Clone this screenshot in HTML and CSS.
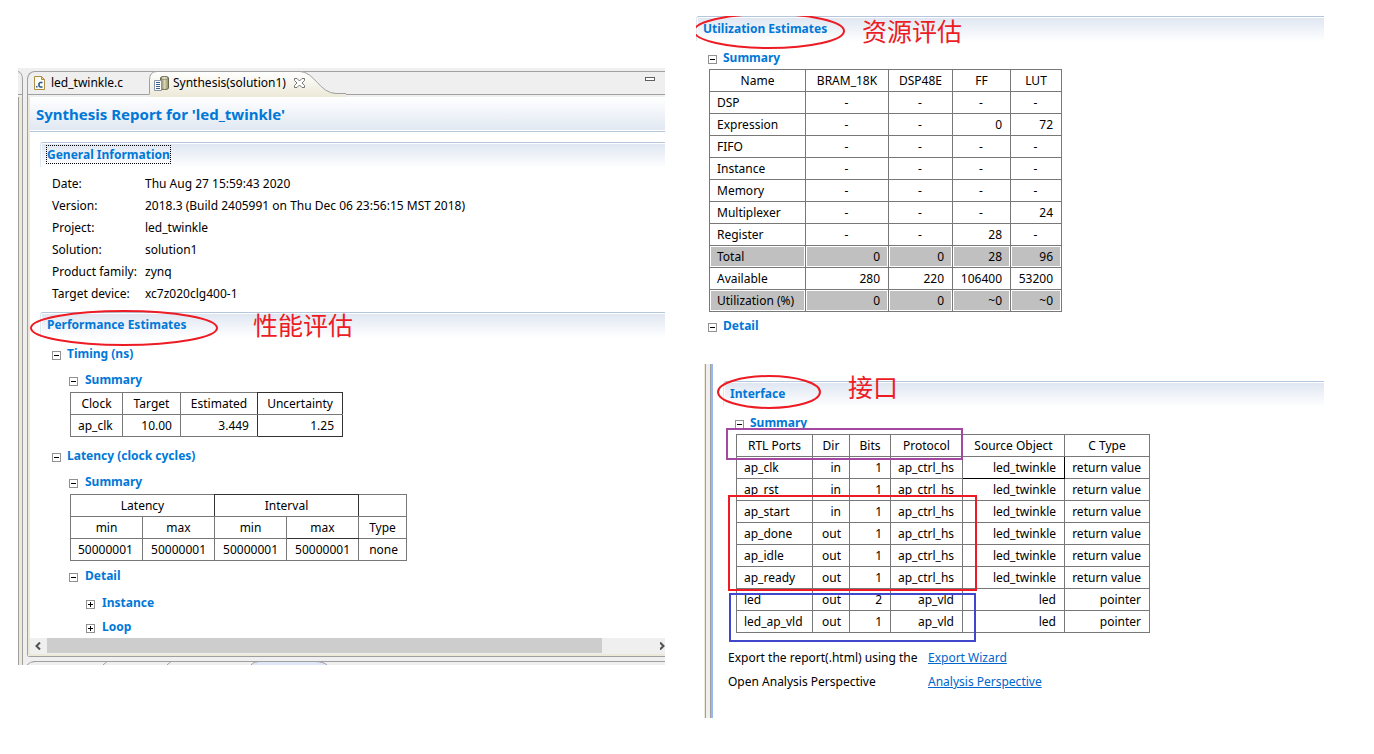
FILE: index.html
```html
<!DOCTYPE html>
<html lang="en">
<head>
<meta charset="utf-8">
<title>Synthesis Report for 'led_twinkle'</title>
<link rel="stylesheet" href="styles.css">
</head>
<body>
<svg class="defs" width="0" height="0" aria-hidden="true">
  <symbol id="minus" viewBox="0 0 9 9"><rect x=".5" y=".5" width="8" height="8" fill="#fff" stroke="#919191"/><path d="M2 4.500h5" stroke="#000"/></symbol>
  <symbol id="plus" viewBox="0 0 9 9"><rect x=".5" y=".5" width="8" height="8" fill="#fff" stroke="#919191"/><path d="M2 4.500h5M4.500 2v5" stroke="#000"/></symbol>
</svg>
<div class="page">
  <div class="editor">
    <div class="rail">
      <svg class="rail-top" width="5" height="29" aria-hidden="true"><path d="M0 3.500Q4.500 4.500 4.500 12V29M0 26.500H5" fill="none" stroke="#a0a0a0"/></svg>
      <div class="rail-body"></div>
    </div>
    <div class="stack">
      <div class="frame">
        <div class="tabs" role="tablist">
          <button class="tab" role="tab" aria-selected="false">
            <svg width="12" height="15" viewBox="0 0 12 15" aria-hidden="true"><path d="M.500 .500h7l3 3v10H.500z" fill="#fdfcf4" stroke="#b08d45"/><path d="M7.500 .500v3h3z" fill="#e8d29a" stroke="#b08d45"/><path d="M8.500 6.500H6.200L5 7.500v2.500l1.200 1H8.500" fill="none" stroke="#24588c" stroke-width="1.600"/><path d="M2 10h1.500v1.500H2z" fill="#24588c"/></svg>
            <span>led_twinkle.c</span>
          </button>
          <button class="tab active" role="tab" aria-selected="true">
            <svg class="tab-shape" width="197" height="26" aria-hidden="true">
              <defs><linearGradient id="cream" x2="0" y2="1"><stop offset="0" stop-color="#fff"/><stop offset="1" stop-color="#ece9d8"/></linearGradient></defs>
              <path d="M.500 26V9Q.500 .500 8 .500H151C165 .500 171 22.500 187 22.500H197V26z" fill="url(#cream)"/>
              <path d="M.500 23V9Q.500 .500 8 .500H151C165 .500 171 22.500 187 22.500H197" fill="none" stroke="#a0a0a0"/>
            </svg>
            <svg width="15" height="15" viewBox="0 0 15 15" aria-hidden="true"><defs><linearGradient id="drum"><stop offset="0" stop-color="#77765a"/><stop offset=".5" stop-color="#d9d6b4"/><stop offset="1" stop-color="#8f8d6c"/></linearGradient></defs><path d="M6.500 2C6.500 0 14.500 0 14.500 2V12C14.500 14 6.500 14 6.500 12z" fill="url(#drum)" stroke="#69684c"/><ellipse cx="10.500" cy="2" rx="3.500" ry="1.300" fill="#f4f1dc" stroke="#69684c" stroke-width=".7"/><path d="M.500 4.500h7v10h-7z" fill="#fff" stroke="#8a94a2"/><path d="M2 6.500h4M2 8.500h4M2 10.500h4M2 12.500h4" stroke="#37638e"/></svg>
            <span>Synthesis(solution1)</span>
            <svg class="close" width="11" height="10" viewBox="0 0 11 10" aria-hidden="true"><path d="M.500 .500h2.500L5.500 3 8 .500h2.500V2.500L8 5l2.500 2.500v2H8L5.500 7 3 9.500H.500v-2L3 5 .500 2.500z" fill="#fff" stroke="#686868" stroke-width=".9"/></svg>
          </button>
          <button class="minimize" aria-label="Minimize"><svg width="10" height="4"><rect x=".5" y=".5" width="9" height="3" fill="#fff" stroke="#606060"/></svg></button>
        </div>
        <main class="report">
          <h1 class="title">Synthesis Report for 'led_twinkle'</h1>
          <section class="section">
            <h2 class="bar"><span class="focused">General Information</span></h2>
            <dl class="info">
              <dt>Date:</dt><dd>Thu Aug 27 15:59:43 2020</dd>
              <dt>Version:</dt><dd>2018.3 (Build 2405991 on Thu Dec 06 23:56:15 MST 2018)</dd>
              <dt>Project:</dt><dd>led_twinkle</dd>
              <dt>Solution:</dt><dd>solution1</dd>
              <dt>Product family:</dt><dd>zynq</dd>
              <dt>Target device:</dt><dd>xc7z020clg400-1</dd>
            </dl>
          </section>
          <section class="section">
            <h2 class="bar">Performance Estimates</h2>
            <svg class="mark mark-performance" width="190" height="38" aria-hidden="true"><ellipse cx="95" cy="20" rx="93" ry="17"/></svg>
            <span class="note note-performance" lang="zh">性能评估</span>
            <div class="tree">
              <h3 class="node first"><button class="toggle"><svg width="9" height="9"><use href="#minus"/></svg>Timing (ns)</button></h3>
              <div class="branch">
                <h4 class="node child"><button class="toggle"><svg width="9" height="9"><use href="#minus"/></svg>Summary</button></h4>
                <table class="grid timing">
                  <colgroup><col><col><col><col></colgroup>
                  <tr><th>Clock</th><th>Target</th><th class="dark-right">Estimated</th><th class="dark-top dark-right">Uncertainty</th></tr>
                  <tr><td>ap_clk</td><td>10.00</td><td class="dark-right">3.449</td><td class="dark-right dark-bottom">1.25</td></tr>
                </table>
              </div>
              <h3 class="node next"><button class="toggle"><svg width="9" height="9"><use href="#minus"/></svg>Latency (clock cycles)</button></h3>
              <div class="branch">
                <h4 class="node child"><button class="toggle"><svg width="9" height="9"><use href="#minus"/></svg>Summary</button></h4>
                <table class="grid latency">
                  <colgroup><col><col><col><col><col></colgroup>
                  <tr><th colspan="2" class="dark-right">Latency</th><th colspan="2" class="dark-top dark-right">Interval</th><th></th></tr>
                  <tr><th>min</th><th>max</th><th>min</th><th class="dark-bottom">max</th><th>Type</th></tr>
                  <tr><td>50000001</td><td>50000001</td><td>50000001</td><td>50000001</td><td>none</td></tr>
                </table>
                <h4 class="node after-table"><button class="toggle"><svg width="9" height="9"><use href="#minus"/></svg>Detail</button></h4>
                <div class="branch">
                  <h5 class="node leaf"><button class="toggle"><svg width="9" height="9"><use href="#plus"/></svg>Instance</button></h5>
                  <h5 class="node leaf-next"><button class="toggle"><svg width="9" height="9"><use href="#plus"/></svg>Loop</button></h5>
                </div>
              </div>
            </div>
          </section>
        </main>
        <div class="scroll">
          <button class="arrow" aria-label="Scroll left"><svg width="6" height="8"><path d="M5 .500 1.500 4 5 7.500" fill="none" stroke="#505050" stroke-width="2"/></svg></button>
          <div class="track"><div class="thumb"></div></div>
          <button class="arrow-end" aria-label="Scroll right"><svg width="5" height="8"><path d="M0 .500 3.500 4 0 7.500" fill="none" stroke="#505050" stroke-width="2"/></svg></button>
        </div>
      </div>
      <svg class="views" height="8" aria-hidden="true">
        <path d="M224 8Q226 4.500 232 4.500H289Q297 4.500 300 8z" fill="#dfe8f8"/>
        <path d="M0 8Q3 4.500 8 4.500M76 8 80 4.500M140 8 144 4.500M224 8Q226 4.500 232 4.500M289 4.500Q297 5 300 8" fill="none" stroke="#a0a0a0"/>
        <line x1="6" y1="4.500" x2="100%" y2="4.500" stroke="#a0a0a0"/>
      </svg>
    </div>
  </div>

  <div class="side">
    <section class="section utilization">
      <h2 class="bar">Utilization Estimates</h2>
      <svg class="mark mark-utilization" width="152" height="36" aria-hidden="true"><ellipse cx="73" cy="15" rx="75" ry="17"/></svg>
      <span class="note note-utilization" lang="zh">资源评估</span>
      <div class="tree">
        <h3 class="node first"><button class="toggle"><svg width="9" height="9"><use href="#minus"/></svg>Summary</button></h3>
        <table class="grid usage">
          <colgroup><col><col><col><col><col></colgroup>
          <tr><th>Name</th><th>BRAM_18K</th><th>DSP48E</th><th>FF</th><th>LUT</th></tr>
          <tr><td>DSP</td><td class="none">-</td><td class="none">-</td><td class="none">-</td><td class="none">-</td></tr>
          <tr><td>Expression</td><td class="none">-</td><td class="none">-</td><td>0</td><td>72</td></tr>
          <tr><td>FIFO</td><td class="none">-</td><td class="none">-</td><td class="none">-</td><td class="none">-</td></tr>
          <tr><td>Instance</td><td class="none">-</td><td class="none">-</td><td class="none">-</td><td class="none">-</td></tr>
          <tr><td>Memory</td><td class="none">-</td><td class="none">-</td><td class="none">-</td><td class="none">-</td></tr>
          <tr><td>Multiplexer</td><td class="none">-</td><td class="none">-</td><td class="none">-</td><td>24</td></tr>
          <tr><td>Register</td><td class="none">-</td><td class="none">-</td><td>28</td><td class="none">-</td></tr>
          <tr class="shaded"><td>Total</td><td>0</td><td>0</td><td>28</td><td>96</td></tr>
          <tr><td>Available</td><td>280</td><td>220</td><td>106400</td><td>53200</td></tr>
          <tr class="shaded"><td>Utilization (%)</td><td>0</td><td>0</td><td>~0</td><td>~0</td></tr>
        </table>
        <h3 class="node detail"><button class="toggle"><svg width="9" height="9"><use href="#minus"/></svg>Detail</button></h3>
      </div>
    </section>

    <div class="interface">
      <div class="sash"></div>
      <section class="section ports-section">
        <h2 class="bar">Interface</h2>
        <div class="tree">
          <h3 class="node first"><button class="toggle"><svg width="9" height="9"><use href="#minus"/></svg>Summary</button></h3>
          <table class="grid ports">
            <colgroup><col><col><col><col><col><col></colgroup>
            <tr><th>RTL Ports</th><th>Dir</th><th>Bits</th><th>Protocol</th><th>Source Object</th><th>C Type</th></tr>
            <tr><td>ap_clk</td><td>in</td><td>1</td><td>ap_ctrl_hs</td><td class="black-edge">led_twinkle</td><td>return value</td></tr>
            <tr><td>ap_rst</td><td>in</td><td>1</td><td>ap_ctrl_hs</td><td>led_twinkle</td><td>return value</td></tr>
            <tr><td>ap_start</td><td>in</td><td>1</td><td>ap_ctrl_hs</td><td>led_twinkle</td><td>return value</td></tr>
            <tr><td>ap_done</td><td>out</td><td>1</td><td>ap_ctrl_hs</td><td>led_twinkle</td><td>return value</td></tr>
            <tr><td>ap_idle</td><td>out</td><td>1</td><td>ap_ctrl_hs</td><td>led_twinkle</td><td>return value</td></tr>
            <tr><td>ap_ready</td><td>out</td><td>1</td><td>ap_ctrl_hs</td><td>led_twinkle</td><td>return value</td></tr>
            <tr><td>led</td><td>out</td><td>2</td><td>ap_vld</td><td>led</td><td>pointer</td></tr>
            <tr><td>led_ap_vld</td><td>out</td><td>1</td><td>ap_vld</td><td>led</td><td>pointer</td></tr>
          </table>
        </div>
        <div class="actions">
          <span>Export the report(.html) using the</span><a href="#export">Export Wizard</a>
          <span>Open Analysis Perspective</span><a href="#analysis">Analysis Perspective</a>
        </div>
      </section>
      <svg class="mark mark-interface" width="280" height="290" aria-hidden="true">
        <ellipse cx="65" cy="28" rx="51" ry="16"/>
        <rect class="purple" x="23" y="65" width="235" height="30"/>
        <rect x="25" y="132" width="247" height="94"/>
        <rect class="blue" x="26" y="230" width="245" height="47"/>
      </svg>
      <span class="note note-interface" lang="zh">接口</span>
    </div>
  </div>
</div>
</body>
</html>
```
FILE: styles.css
```css
* { box-sizing: border-box; }
body {
  margin: 0;
  background: #fff;
  color: #000;
  font: 12px/22px "Noto Sans", "Noto Sans CJK SC", sans-serif;
}
h1, h2, h3, h4, h5, dl, dd { margin: 0; }
button {
  padding: 0;
  border: 0;
  background: none;
  color: inherit;
  font: inherit;
}
svg { display: block; flex: none; }
.defs { position: absolute; }

.page {
  display: grid;
  grid-template-columns: 647fr 628fr;
  column-gap: 31px;
  align-items: start;
  padding: 16px 50px 36px 18px;
}

/* Editor window */
.editor {
  display: flex;
  gap: 4px;
  margin-top: 52px;
  background: #efefef;
}
.rail { display: flex; flex-direction: column; width: 5px; }
.rail-body {
  flex: 1;
  border: solid #a0a0a0;
  border-width: 0 1px;
  background: #ece9d8;
}
.stack { flex: 1; min-width: 0; padding-top: 3px; }
.frame {
  border: solid #a0a0a0;
  border-width: 1px 0 1px 1px;
  border-radius: 8px 0 0 3px;
}
.tabs {
  position: relative;
  display: flex;
  height: 23px;
  border-bottom: 1px solid #a0a0a0;
}
.tab {
  position: relative;
  display: flex;
  align-items: center;
  gap: 5px;
  width: 121px;
  padding-left: 6px;
  white-space: nowrap;
}
.tab.active { width: 197px; gap: 4px; padding-left: 5px; }
.tab > * { position: relative; }
.tab > .tab-shape { position: absolute; top: -1px; left: 0; }
.close { margin-left: 4px; }
.minimize { margin: 5px 10px auto auto; }

.report {
  margin-top: 2px;
  border-left: 2px solid #ece9d8;
  background: #fff;
}
.title {
  height: 35px;
  margin-bottom: 10px;
  padding-left: 6px;
  border-bottom: 1px solid #b3c6dc;
  background: linear-gradient(#fff, #e1e8f2) 0 0 / 100% 33px no-repeat;
  color: #0078d7;
  font-size: 15px;
  line-height: 35px;
}
.section { position: relative; }
.report .section { margin-left: 10px; }
.bar {
  height: 25px;
  padding: 1px 0 0 6px;
  border-top: 1px solid #b3c6dc;
  border-left: 1px solid #dfe7f1;
  border-top-left-radius: 3px;
  background: linear-gradient(#e0e7f2, #fff) 1px 1px no-repeat;
  color: #0078d7;
  font-size: 12px;
  line-height: 22px;
}
.focused { outline: 1px dotted #000; }
.info {
  display: grid;
  grid-template-columns: 93px 1fr;
  padding: 6px 0 7px 12px;
  white-space: nowrap;
}

.tree { padding-left: 12px; }
.branch { padding-left: 17px; }
.node { color: #0078d7; font-size: 12px; line-height: 22px; }
.toggle { display: flex; align-items: center; gap: 6px; height: 22px; }
.branch .toggle { gap: 7px; }
.toggle svg { margin-top: 3px; }
.first { margin-top: 6px; }
.child { margin: 4px 0 1px; }
.next { margin-top: 8px; }
.after-table { margin-top: 4px; }
.detail { margin-top: 3px; }
.leaf { margin-top: 5px; }
.leaf-next { margin-top: 2px; }

/* Data tables */
.grid {
  margin-left: 1px;
  border-collapse: collapse;
  table-layout: fixed;
  white-space: nowrap;
}
.grid tr { height: 22px; }
.grid th, .grid td {
  padding: 0 8px 0 7px;
  border: 1px solid #787878;
  font-weight: 400;
  line-height: 21px;
  text-align: right;
}
.grid th { padding: 0; text-align: center; }
.grid td:first-child { text-align: left; }
.grid .none { text-align: center; }
.grid .dark-top { border-top-color: #333; }
.grid .dark-right { border-right-color: #333; }
.grid .dark-bottom { border-bottom-color: #333; }
.grid .black-edge { border-right-color: #000; border-bottom-color: #000; }
.shaded td { background: #c0c0c0; box-shadow: inset 0 0 0 1px #fff; background-clip: padding-box; }

.timing { width: 273px; }
.timing col:nth-child(1) { width: 52px; }
.timing col:nth-child(2) { width: 58px; }
.timing col:nth-child(3) { width: 77px; }
.timing col:nth-child(4) { width: 85px; }
.latency { width: 337px; }
.latency col { width: 72px; }
.latency col:last-child { width: 48px; }
.usage { width: 353px; }
.usage col:nth-child(1) { width: 96px; }
.usage col:nth-child(2) { width: 83px; }
.usage col:nth-child(3) { width: 64px; }
.usage col:nth-child(4) { width: 58px; }
.usage col:nth-child(5) { width: 51px; }
.ports { width: 414px; }
.ports col:nth-child(1) { width: 76px; }
.ports col:nth-child(2) { width: 37px; }
.ports col:nth-child(3) { width: 41px; }
.ports col:nth-child(4) { width: 72px; }
.ports col:nth-child(5) { width: 102px; }
.ports col:nth-child(6) { width: 85px; }

/* Horizontal scroll bar */
.scroll {
  display: flex;
  align-items: center;
  height: 18px;
  padding-bottom: 1px;
  border: solid #ece9d8;
  border-width: 0 0 2px 2px;
}
.arrow { width: 17px; padding-left: 5px; }
.arrow-end { width: 8px; padding-left: 3px; }
.track { flex: 1; align-self: stretch; }
.thumb { width: 91%; height: 100%; background: #cdcdcd; }
.views { width: 100%; }

/* Right column */
.interface { position: relative; display: flex; margin: 27px 0 0 8px; }
.sash {
  width: 9px;
  border-left: 1px solid #ece9d8;
  background: linear-gradient(90deg, #a0a0a0 1px, #efefef 1px 5px, #a0a0a0 5px 6px, #99b7f2 6px);
}
.ports-section { flex: 1; padding: 17px 0 24px 10px; }
.actions {
  display: grid;
  grid-template-columns: 200px 1fr;
  padding: 13px 0 0 5px;
  line-height: 24px;
  white-space: nowrap;
}
.actions a { justify-self: start; color: #0066cc; }

/* Review marks drawn over the report */
.mark {
  position: absolute;
  overflow: hidden;
  fill: none;
  stroke: #ed1c24;
  stroke-width: 2px;
  pointer-events: none;
}
.mark .purple { stroke: #a349a4; }
.mark .blue { stroke: #3f48cc; }
.mark-performance { top: -4px; left: -11px; }
.mark-utilization { top: 0; left: 0; }
.mark-interface { top: 0; left: 0; }
.note {
  position: absolute;
  color: #ed1c24;
  font: 25px/24px KaiTi, STKaiti, "Noto Sans CJK SC", sans-serif;
  white-space: nowrap;
}
.note-performance { top: 0; left: 213px; }
.note-utilization { top: 2px; left: 166px; }
.note-interface { top: 10px; left: 144px; }
```
